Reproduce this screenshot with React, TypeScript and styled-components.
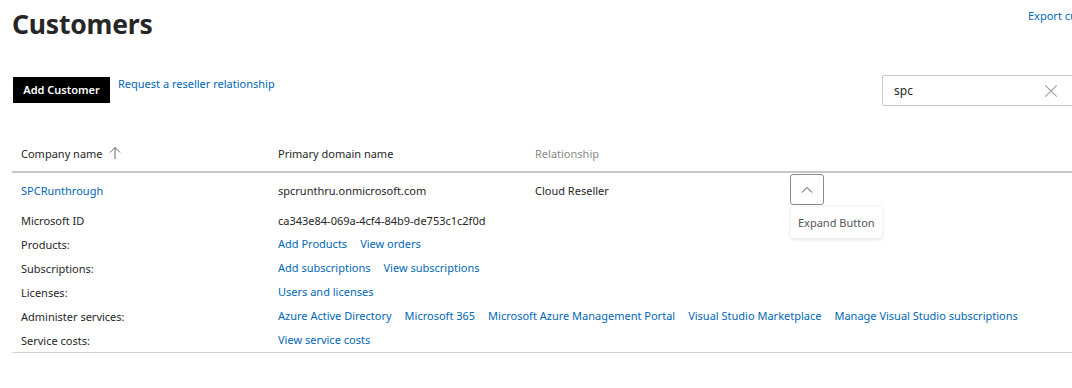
import React from 'react';
import styled, { createGlobalStyle } from 'styled-components';

const GlobalStyle = createGlobalStyle`
  html, body {
    margin: 0;
    padding: 0;
    background: #fff;
    overflow: hidden;
  }
  body {
    font-family: 'Noto Sans', 'Open Sans', sans-serif;
    color: #262626;
  }
`;

interface DetailRow {
  label: string;
  value?: string;
  links?: string[];
}

const details: DetailRow[] = [
  { label: 'Microsoft ID', value: 'ca343e84-069a-4cf4-84b9-de753c1c2f0d' },
  { label: 'Products:', links: ['Add Products', 'View orders'] },
  { label: 'Subscriptions:', links: ['Add subscriptions', 'View subscriptions'] },
  { label: 'Licenses:', links: ['Users and licenses'] },
  {
    label: 'Administer services:',
    links: [
      'Azure Active Directory',
      'Microsoft 365',
      'Microsoft Azure Management Portal',
      'Visual Studio Marketplace',
      'Manage Visual Studio subscriptions',
    ],
  },
  { label: 'Service costs:', links: ['View service costs'] },
];

const App = () => {
  return (
    <>
      <GlobalStyle />
      <Page>
        <TitleRow>
          <Title>Customers</Title>
          <ExportLink>Export customers</ExportLink>
        </TitleRow>

        <Toolbar>
          <Actions>
            <PrimaryButton>Add Customer</PrimaryButton>
            <Link>Request a reseller relationship</Link>
          </Actions>
          <SearchBox>
            <SearchText>spc</SearchText>
            <ClearIcon viewBox="0 0 16 16">
              <path d="M1.5 1.5 L14.5 14.5 M14.5 1.5 L1.5 14.5" />
            </ClearIcon>
          </SearchBox>
        </Toolbar>

        <Table>
          <HeaderRow>
            <HeaderCell>
              Company name
              <SortIcon viewBox="0 0 12 14">
                <path d="M6 13 V1.5 M1 6.5 L6 1.5 L11 6.5" />
              </SortIcon>
            </HeaderCell>
            <HeaderCell>Primary domain name</HeaderCell>
            <HeaderCell muted>Relationship</HeaderCell>
          </HeaderRow>

          <CustomerRow>
            <Cell>
              <Link>SPCRunthrough</Link>
            </Cell>
            <Cell>spcrunthru.onmicrosoft.com</Cell>
            <Cell>Cloud Reseller</Cell>
            <ExpandCell>
              <ExpandButton>
                <svg viewBox="0 0 12 8" width="12" height="8">
                  <path d="M1 6.5 L6 1.5 L11 6.5" fill="none" stroke="#444" strokeWidth="1" />
                </svg>
              </ExpandButton>
              <Tooltip>Expand Button</Tooltip>
            </ExpandCell>
          </CustomerRow>

          <Details>
            {details.map((row) => (
              <DetailLine key={row.label}>
                <Cell>{row.label}</Cell>
                <LinkGroup>
                  {row.value && <span>{row.value}</span>}
                  {row.links?.map((l) => (
                    <Link key={l}>{l}</Link>
                  ))}
                </LinkGroup>
              </DetailLine>
            ))}
          </Details>
        </Table>
      </Page>
    </>
  );
};

const Page = styled.div`
  width: 1110px;
  padding: 0 0 0 12px;
`;

const TitleRow = styled.div`
  display: flex;
  justify-content: space-between;
  align-items: flex-start;
  height: 75px;
`;

const Title = styled.h1`
  margin: 6px 0 0;
  font-size: 26.5px;
  font-weight: 700;
  line-height: 36px;
  color: #262626;
  letter-spacing: -0.2px;
`;

const ExportLink = styled.a`
  margin-top: 8px;
  margin-right: 3px;
  font-size: 11px;
  color: #0067b8;
  white-space: nowrap;
`;

const Toolbar = styled.div`
  display: flex;
  justify-content: space-between;
  align-items: flex-start;
  height: 60px;
`;

const Actions = styled.div`
  display: flex;
  align-items: flex-start;
  gap: 8px;
  padding-top: 2px;
`;

const PrimaryButton = styled.button`
  height: 26px;
  width: 97px;
  padding: 0 0 1px;
  border: none;
  background: #000;
  color: #fff;
  font-family: inherit;
  font-size: 11px;
  font-weight: 600;
  margin-left: 1px;
`;

const Link = styled.a`
  font-size: 11px;
  color: #0067b8;
  line-height: 14px;
  cursor: pointer;
  white-space: nowrap;
`;

const SearchBox = styled.div`
  display: flex;
  align-items: center;
  justify-content: space-between;
  box-sizing: border-box;
  width: 240px;
  height: 31px;
  border: 1px solid #c8c8c8;
  border-radius: 2px;
  padding: 0 63px 0 11px;
`;

const SearchText = styled.span`
  font-size: 12px;
  color: #262626;
`;

const ClearIcon = styled.svg`
  width: 14px;
  height: 14px;
  fill: none;
  stroke: #9a9a9a;
  stroke-width: 1.2;
`;

const Table = styled.div`
  display: flex;
  flex-direction: column;
`;

const columns = '257px 257px 255px 1fr';

const HeaderRow = styled.div`
  display: grid;
  grid-template-columns: ${columns};
  padding: 0 0 0 9px;
  height: 38px;
  align-items: center;
  border-bottom: 2px solid #c6c6c6;
  box-sizing: border-box;
`;

const HeaderCell = styled.div<{ muted?: boolean }>`
  display: flex;
  align-items: center;
  gap: 6px;
  font-size: 11px;
  color: ${({ muted }) => (muted ? '#8a8a8a' : '#262626')};
`;

const SortIcon = styled.svg`
  width: 12px;
  height: 14px;
  fill: none;
  stroke: #666;
  stroke-width: 1;
`;

const CustomerRow = styled.div`
  display: grid;
  grid-template-columns: ${columns};
  padding: 0 0 0 9px;
  height: 35px;
  align-items: center;
`;

const Cell = styled.div`
  font-size: 11px;
  color: #262626;
  white-space: nowrap;
`;

const ExpandCell = styled.div`
  position: relative;
  height: 35px;
  display: flex;
  align-items: flex-start;
`;

const ExpandButton = styled.button`
  width: 34px;
  height: 31px;
  margin-top: 1px;
  border: 1px solid #8a8a8a;
  border-radius: 3px;
  background: #fff;
  display: flex;
  align-items: center;
  justify-content: center;
  padding: 0;
`;

const Tooltip = styled.div`
  position: absolute;
  left: 1px;
  top: 34px;
  padding: 8px 7px;
  background: #fff;
  border-radius: 3px;
  box-shadow: 0 1px 4px rgba(0, 0, 0, 0.14);
  font-size: 11px;
  color: #555;
  white-space: nowrap;
  z-index: 2;
`;

const Details = styled.div`
  display: flex;
  flex-direction: column;
  padding: 0 0 0 9px;
  border-bottom: 1px solid #d2d2d2;
`;

const DetailLine = styled.div`
  display: grid;
  grid-template-columns: 257px 1fr;
  height: 24px;
  align-items: center;
`;

const LinkGroup = styled.div`
  display: flex;
  gap: 13px;
  font-size: 11px;
  color: #262626;
  white-space: nowrap;
`;

export default App;
